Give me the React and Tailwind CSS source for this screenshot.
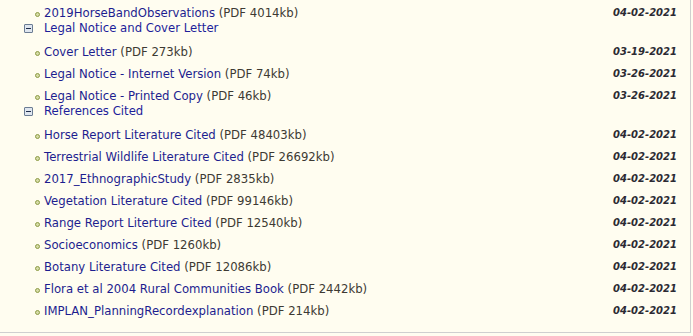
const sections = [
  { type: "item", name: "2019HorseBandObservations", size: "4014kb", date: "04-02-2021" },
  { type: "header", name: "Legal Notice and Cover Letter" },
  { type: "item", name: "Cover Letter", size: "273kb", date: "03-19-2021" },
  { type: "item", name: "Legal Notice - Internet Version", size: "74kb", date: "03-26-2021" },
  { type: "item", name: "Legal Notice - Printed Copy", size: "46kb", date: "03-26-2021" },
  { type: "header", name: "References Cited" },
  { type: "item", name: "Horse Report Literature Cited", size: "48403kb", date: "04-02-2021" },
  { type: "item", name: "Terrestrial Wildlife Literature Cited", size: "26692kb", date: "04-02-2021" },
  { type: "item", name: "2017_EthnographicStudy", size: "2835kb", date: "04-02-2021" },
  { type: "item", name: "Vegetation Literature Cited", size: "99146kb", date: "04-02-2021" },
  { type: "item", name: "Range Report Literture Cited", size: "12540kb", date: "04-02-2021" },
  { type: "item", name: "Socioeconomics", size: "1260kb", date: "04-02-2021" },
  { type: "item", name: "Botany Literature Cited", size: "12086kb", date: "04-02-2021" },
  { type: "item", name: "Flora et al 2004 Rural Communities Book", size: "2442kb", date: "04-02-2021" },
  { type: "item", name: "IMPLAN_PlanningRecordexplanation", size: "214kb", date: "04-02-2021" },
];

function MinusBox() {
  return (
    <span className="w-[9px] h-[9px] mt-[3px] border border-[#6b7c93] bg-[#dfe6ef] rounded-[1px] flex items-center justify-center shrink-0">
      <span className="w-[5px] h-px bg-[#1f2d4a]"></span>
    </span>
  );
}

function Item({ row }) {
  return (
    <div className="h-[22px] pt-[6px] flex items-start pl-[35px] pr-[13px]">
      <span className="w-[5px] h-[5px] mt-[7px] mr-[4px] rounded-full border border-[#8c9a45] bg-[#d6dca6] shrink-0"></span>
      <span className="flex-grow leading-[16px] text-[11.7px]">
        <a className="text-[#1d1d8f]" href="#">{row.name}</a>
        <span className="text-[#3d3a33]"> (PDF {row.size})</span>
      </span>
      <span className="leading-[16px] text-[10px] font-bold italic text-[#2b2a33]">{row.date}</span>
    </div>
  );
}

function Header({ row }) {
  return (
    <div className="h-[17px] flex items-start pl-[24px] leading-[15px] text-[11.7px]">
      <MinusBox />
      <span className="ml-[11px] text-[#1d1d9a]">{row.name}</span>
    </div>
  );
}

export default function App() {
  return (
    <div className="w-[693px] h-[336px] bg-[#fffdf0] overflow-hidden" style={{ fontFamily: '"DejaVu Sans", Verdana, sans-serif' }}>
      <div className="w-[691px] h-[333px] border-r border-b border-[#cfcfcf] overflow-hidden">
        <div className="-mt-px">
          {sections.map((row, i) =>
            row.type === "header"
              ? <Header key={i} row={row} />
              : <Item key={i} row={row} />
          )}
        </div>
      </div>
    </div>
  );
}
